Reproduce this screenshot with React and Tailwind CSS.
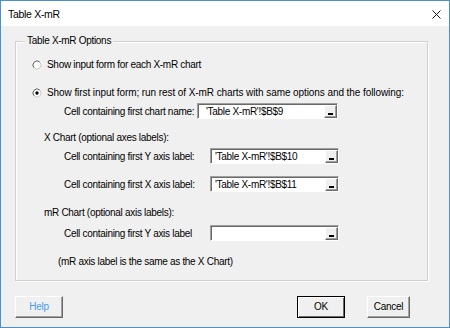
import React from "react";

function Radio({ checked }) {
  return (
    <svg width="10" height="10" viewBox="0 0 10 10" className="shrink-0">
      <circle cx="5" cy="5" r="4" fill="#fff" />
      <path d="M2.17 7.83 A4 4 0 0 1 7.83 2.17" fill="none" stroke="#5a5a5a" strokeWidth="1" />
      <path d="M7.83 2.17 A4 4 0 0 1 2.17 7.83" fill="none" stroke="#c8c8c8" strokeWidth="1" />
      {checked && <circle cx="5" cy="5" r="1.7" fill="#000" />}
    </svg>
  );
}

function RefEdit({ width, value, pad }) {
  return (
    <div
      className={`flex h-[16px] bg-white border border-t-[#a0a0a0] border-l-[#a0a0a0] border-b-white border-r-white shadow-[inset_1px_1px_0_#696969] pt-px pl-px ${width}`}
    >
      <div className={`flex-1 flex items-center leading-[13px] whitespace-nowrap overflow-hidden ${pad}`}>{value}</div>
      <div className="w-[13px] h-[13px] bg-[#f0f0f0] border border-t-white border-l-white border-b-[#696969] border-r-[#696969] shadow-[inset_-1px_-1px_0_#a0a0a0] flex items-end justify-center pb-[2px]">
        <span className="block w-[5px] h-[2px] bg-black" />
      </div>
    </div>
  );
}

function Row({ label, labelW, inputW, value, pad, className = "" }) {
  return (
    <div className={`flex items-center h-[16px] pl-[48px] ${className}`}>
      <span className={`whitespace-nowrap leading-[14px] pt-[1px] ${labelW}`}>{label}</span>
      <RefEdit width={inputW} value={value} pad={pad} />
    </div>
  );
}

export default function App() {
  return (
    <div className="w-[450px] h-[328px] border border-[#4d8fcc] bg-[#f0f0f0] flex flex-col font-['Liberation_Sans',Arial,sans-serif] text-[10px] tracking-[-0.3px] text-black overflow-hidden">
      {/* Title bar */}
      <div className="h-[25px] bg-white flex items-center justify-between pl-[7px] pr-[8px] shrink-0">
        <span className="text-[10.5px] leading-[14px] pt-[1px]">Table X-mR</span>
        <svg width="9" height="9" viewBox="0 0 9 9" className="mt-[1px]">
          <path d="M0.5 0.5 L8.5 8.5 M8.5 0.5 L0.5 8.5" stroke="#1a1a1a" strokeWidth="1" />
        </svg>
      </div>

      {/* Body */}
      <div className="flex flex-col pl-[14px] pr-[21px] pt-[15px]">
        <div className="relative border border-[#d0d0d0] shadow-[1px_1px_0_#fff,inset_1px_1px_0_#fff] flex flex-col pt-[16px] pb-[11px]">
          <span className="absolute -top-[8px] left-[9px] px-[2px] bg-[#f0f0f0] leading-[14px]">Table X-mR Options</span>

          <div className="flex items-center h-[14px] pl-[16px] gap-[5px]">
            <Radio checked={false} />
            <span className="leading-[14px] whitespace-nowrap">Show input form for each X-mR chart</span>
          </div>

          <div className="flex items-center h-[14px] pl-[16px] gap-[5px] mt-[14px]">
            <Radio checked={true} />
            <span className="leading-[14px] whitespace-nowrap tracking-[-0.08px]">
              Show first input form; run rest of X-mR charts with same options and the following:
            </span>
          </div>

          <Row
            className="mt-[3px]"
            label="Cell containing first chart name:"
            labelW="w-[133px]"
            inputW="w-[141px]"
            value="'Table X-mR'!$B$9"
            pad="pl-[7px]"
          />

          <div className="h-[14px] leading-[14px] pl-[28px] mt-[12px] whitespace-nowrap">X Chart (optional axes labels):</div>

          <Row
            className="mt-[3px]"
            label="Cell containing first Y axis label:"
            labelW="w-[146px]"
            inputW="w-[129px]"
            value="'Table X-mR'!$B$10"
            pad="pl-[3px]"
          />

          <Row
            className="mt-[12px]"
            label="Cell containing first X axis label:"
            labelW="w-[146px]"
            inputW="w-[129px]"
            value="'Table X-mR'!$B$11"
            pad="pl-[3px]"
          />

          <div className="h-[14px] leading-[14px] pl-[28px] mt-[14px] whitespace-nowrap">mR Chart (optional axis labels):</div>

          <Row
            className="mt-[5px]"
            label="Cell containing first Y axis label"
            labelW="w-[146px]"
            inputW="w-[129px]"
            value=""
            pad="pl-[3px]"
          />

          <div className="h-[14px] leading-[14px] pl-[42px] mt-[14px] whitespace-nowrap">
            (mR axis label is the same as the X Chart)
          </div>
        </div>
      </div>

      {/* Buttons */}
      <div className="flex items-center pl-[14px] pr-[39px] mt-[15px]">
        <button className="w-[48px] h-[22px] bg-[#f0f0f0] border border-t-white border-l-white border-b-[#696969] border-r-[#696969] shadow-[inset_-1px_-1px_0_#a0a0a0] text-[#4a9bf0] leading-none">
          Help
        </button>
        <button className="ml-auto w-[48px] h-[22px] bg-[#f0f0f0] border border-black shadow-[inset_1px_1px_0_#fff,inset_-1px_-1px_0_#696969] leading-none">
          OK
        </button>
        <button className="ml-[22px] w-[43px] h-[22px] bg-[#f0f0f0] border border-t-white border-l-white border-b-[#696969] border-r-[#696969] shadow-[inset_-1px_-1px_0_#a0a0a0] leading-none">
          Cancel
        </button>
      </div>
    </div>
  );
}
